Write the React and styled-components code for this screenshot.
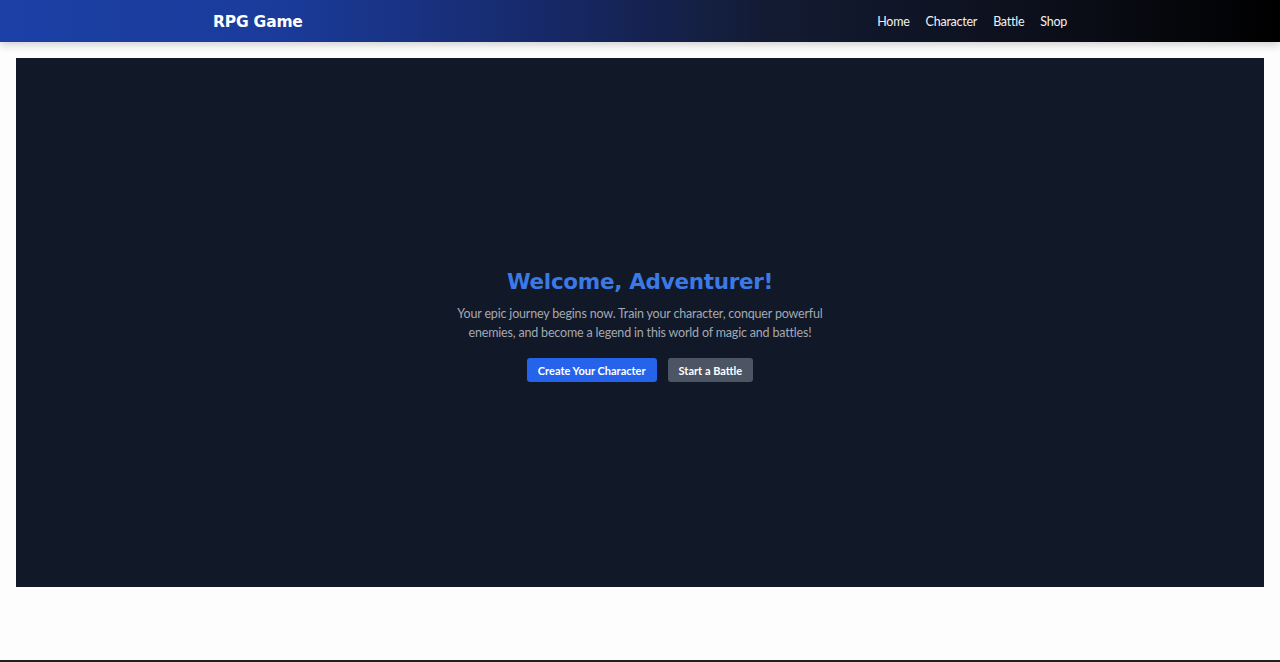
import React from "react";
import styled, { createGlobalStyle } from "styled-components";

const GlobalStyle = createGlobalStyle`
  html, body {
    margin: 0;
    padding: 0;
    background: #fdfdfd;
    font-family: Lato, "Noto Sans", sans-serif;
  }
  body {
    min-height: 662px;
    border-bottom: 2px solid #1f1f1f;
    box-sizing: border-box;
  }
`;

const navLinks = ["Home", "Character", "Battle", "Shop"];

export default function App() {
  return (
    <>
      <GlobalStyle />
      <Header>
        <HeaderInner>
          <Logo>RPG Game</Logo>
          <Nav>
            {navLinks.map((link) => (
              <NavLink key={link} href="#">
                {link}
              </NavLink>
            ))}
          </Nav>
        </HeaderInner>
      </Header>
      <Main>
        <Hero>
          <Title>Welcome, Adventurer!</Title>
          <Intro>
            Your epic journey begins now. Train your character, conquer powerful
            enemies, and become a legend in this world of magic and battles!
          </Intro>
          <Actions>
            <Button $variant="primary">Create Your Character</Button>
            <Button $variant="secondary">Start a Battle</Button>
          </Actions>
        </Hero>
      </Main>
    </>
  );
}

const Header = styled.header`
  height: 42px;
  background: linear-gradient(90deg, #1c40a6 0%, #1a3b9a 22%, #17296a 42%, #131b33 60%, #0c0f1a 82%, #000 100%);
  box-shadow: 0 3px 8px rgba(0, 0, 0, 0.18);
  display: flex;
  justify-content: center;
`;

const HeaderInner = styled.div`
  width: 854px;
  display: flex;
  align-items: center;
  justify-content: space-between;
`;

const Logo = styled.div`
  color: #fff;
  font-family: "DejaVu Sans", sans-serif;
  font-weight: bold;
  font-size: 15.5px;
  letter-spacing: -0.2px;
  margin-top: 2px;
`;

const Nav = styled.nav`
  display: flex;
  gap: 16px;
  margin-top: 1px;
`;

const NavLink = styled.a`
  color: #f1f1f1;
  text-decoration: none;
  font-size: 12.5px;
  letter-spacing: -0.25px;
`;

const Main = styled.main`
  margin: 16px 16px 0;
  height: 529px;
  background: #111827;
  display: flex;
  align-items: center;
  justify-content: center;
`;

const Hero = styled.section`
  display: flex;
  flex-direction: column;
  align-items: center;
  text-align: center;
  margin-top: 6px;
`;

const Title = styled.h1`
  margin: 0 0 9px;
  color: #3b7ae6;
  font-family: "DejaVu Sans", sans-serif;
  font-weight: bold;
  font-size: 21.5px;
  line-height: 26px;
  letter-spacing: -0.3px;
`;

const Intro = styled.p`
  margin: 0 0 16px;
  max-width: 400px;
  color: #a3a9b4;
  font-size: 12.5px;
  line-height: 19px;
  letter-spacing: -0.18px;
`;

const Actions = styled.div`
  display: flex;
  gap: 11px;
`;

const Button = styled.button`
  height: 24px;
  padding: 0 11px;
  border: none;
  border-radius: 3px;
  color: #fff;
  font-family: Lato, sans-serif;
  font-weight: bold;
  font-size: 11px;
  cursor: pointer;
  background: ${(p) => (p.$variant === "primary" ? "#2563eb" : "#4b5563")};
`;
